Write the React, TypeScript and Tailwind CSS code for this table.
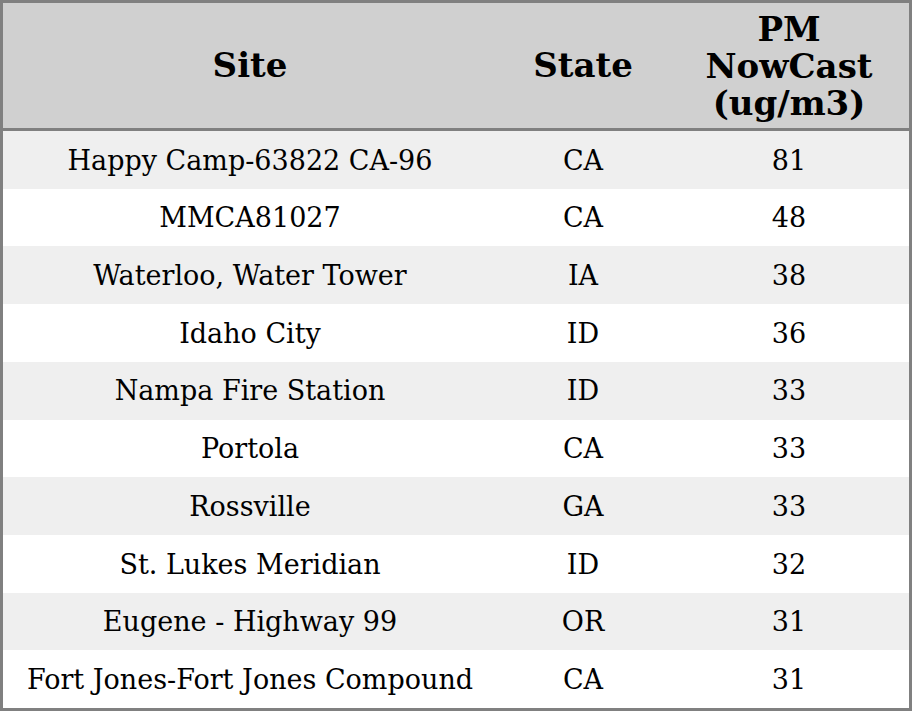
import React from "react";

const rows: [string, string, string][] = [
  ["Happy Camp-63822 CA-96", "CA", "81"],
  ["MMCA81027", "CA", "48"],
  ["Waterloo, Water Tower", "IA", "38"],
  ["Idaho City", "ID", "36"],
  ["Nampa Fire Station", "ID", "33"],
  ["Portola", "CA", "33"],
  ["Rossville", "GA", "33"],
  ["St. Lukes Meridian", "ID", "32"],
  ["Eugene - Highway 99", "OR", "31"],
  ["Fort Jones-Fort Jones Compound", "CA", "31"],
];

export default function App() {
  return (
    <div
      className="w-[912px] h-[711px] bg-white text-black"
      style={{ fontFamily: '"DejaVu Serif", serif' }}
    >
      <div className="w-[912px] h-[711px] border-[3px] border-[#808080] flex flex-col">
        <div className="grid grid-cols-[494px_172px_240px] h-[128px] shrink-0 bg-[#d0d0d0] border-b-[3px] border-[#808080] font-bold text-[34px] leading-[37px]">
          <div className="flex items-center justify-center text-center">Site</div>
          <div className="flex items-center justify-center text-center">State</div>
          <div className="flex items-center justify-center text-center pt-[1px]">
            PM
            <br />
            NowCast
            <br />
            (ug/m3)
          </div>
        </div>
        <div className="flex-1 flex flex-col">
          {rows.map((r, i) => (
            <div
              key={i}
              className={`flex-1 grid grid-cols-[494px_172px_240px] text-[27px] pt-[2px] ${
                i % 2 === 0 ? "bg-[#efefef]" : "bg-white"
              }`}
            >
              <div className="flex items-center justify-center whitespace-nowrap">{r[0]}</div>
              <div className="flex items-center justify-center">{r[1]}</div>
              <div className="flex items-center justify-center">{r[2]}</div>
            </div>
          ))}
        </div>
      </div>
    </div>
  );
}
